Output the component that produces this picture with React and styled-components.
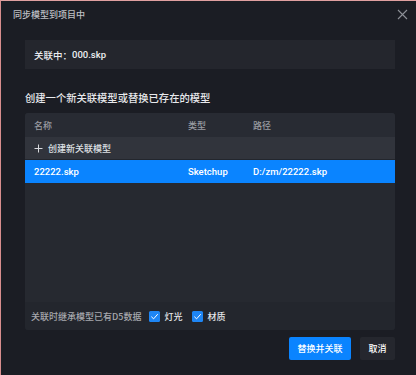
import React from "react";
import styled, { createGlobalStyle } from "styled-components";

const Global = createGlobalStyle`
  html, body { margin: 0; padding: 0; background: #1b1d24; }
  body { font-family: "Noto Sans CJK SC", "Noto Sans", sans-serif; }
  * { box-sizing: border-box; }
`;

const Dialog = styled.div`
  width: 416px;
  height: 375px;
  background: #1b1d24;
  border-top: 1px solid #e0a0a0;
  border-left: 1px solid #d88e8e;
  display: flex;
  flex-direction: column;
  overflow: hidden;
`;

const TitleBar = styled.div`
  height: 26px;
  display: flex;
  align-items: center;
  justify-content: space-between;
  padding: 0 7px 0 12px;
`;

const Title = styled.span`
  font-size: 9px;
  font-weight: 500;
  color: #bfc0c4;
`;

const Close = styled.button`
  background: none;
  border: none;
  padding: 0;
  width: 14px;
  height: 14px;
  display: flex;
  align-items: center;
  justify-content: center;
  cursor: pointer;
`;

const Body = styled.div`
  padding: 13px 21px 0 24px;
  display: flex;
  flex-direction: column;
`;

const InfoBox = styled.div`
  height: 29px;
  background: #24262d;
  display: flex;
  align-items: center;
  padding-left: 9px;
  font-size: 9.5px;
  font-weight: 500;
  color: #eceef2;
`;

const Latin = styled.span`
  font-family: "Roboto", "Noto Sans CJK SC", sans-serif;
`;

const Heading = styled.div`
  margin-top: 20px;
  height: 16px;
  font-size: 10.3px;
  font-weight: 500;
  color: #e8e9ec;
  display: flex;
  align-items: center;
`;

const Table = styled.div`
  margin-top: 8px;
  height: 217px;
  border-radius: 3px;
  overflow: hidden;
  display: flex;
  flex-direction: column;
  background: #23262d;
`;

const Row = styled.div`
  display: grid;
  grid-template-columns: 154px 65px 1fr;
  align-items: center;
  height: ${(p) => p.$h}px;
  padding-left: 9px;
  background: ${(p) => p.$bg};
  color: ${(p) => p.$color};
  font-size: ${(p) => (p.$latin ? 9.5 : 9)}px;
  font-weight: 500;
`;

const CreateRow = styled.div`
  display: flex;
  align-items: center;
  gap: 5px;
  height: 23px;
  padding-left: 9px;
  background: #31343c;
  color: #dfe0e4;
  font-size: 9px;
  font-weight: 500;
  border-bottom: 1px solid #23262d;
`;

const Cell = styled.span`
  font-family: ${(p) => (p.$latin ? '"Roboto", "Noto Sans CJK SC", sans-serif' : '"Noto Sans CJK SC", sans-serif')};
`;

const EmptyArea = styled.div`
  flex: 1;
  background: #262930;
`;

const Footer = styled.div`
  height: 28px;
  display: flex;
  align-items: center;
  padding-left: 6px;
  background: #23262d;
  font-size: 9px;
  font-weight: 500;
`;

const FooterLabel = styled.span`
  color: #a7a9ae;
  margin-right: 8px;
`;

const Check = styled.label`
  display: flex;
  align-items: center;
  gap: 4px;
  color: #e5e6ea;
  margin-right: 10px;
`;

const Box = styled.span`
  width: 11px;
  height: 11px;
  background: #1e86f5;
  border-radius: 1.5px;
  display: flex;
  align-items: center;
  justify-content: center;
`;

const Actions = styled.div`
  display: flex;
  justify-content: flex-end;
  gap: 9px;
  margin-top: 7px;
`;

const Button = styled.button`
  height: 23px;
  border: none;
  border-radius: 2px;
  padding: 0;
  width: ${(p) => (p.$primary ? 62 : 35)}px;
  font-family: "Noto Sans CJK SC", sans-serif;
  font-size: 9px;
  font-weight: 500;
  color: #ffffff;
  background: ${(p) => (p.$primary ? "#0a84ff" : "#25272e")};
`;

const CheckIcon = () => (
  <svg width="9" height="9" viewBox="0 0 10 10">
    <path d="M1.5 5.2 L4 7.6 L8.6 2.4" fill="none" stroke="#fff" strokeWidth="1.1" />
  </svg>
);

export default function App() {
  return (
    <>
      <Global />
      <Dialog>
        <TitleBar>
          <Title>同步模型到项目中</Title>
          <Close aria-label="关闭">
            <svg width="11" height="11" viewBox="0 0 11 11">
              <path d="M1 1 L10 10 M10 1 L1 10" stroke="#8d9097" strokeWidth="1.1" />
            </svg>
          </Close>
        </TitleBar>
        <Body>
          <InfoBox>
            关联中：<Latin>000.skp</Latin>
          </InfoBox>
          <Heading>创建一个新关联模型或替换已存在的模型</Heading>
          <Table>
            <Row $h={24} $bg="#282b33" $color="#9a9ca2">
              <Cell>名称</Cell>
              <Cell>类型</Cell>
              <Cell>路径</Cell>
            </Row>
            <CreateRow>
              <svg width="9" height="9" viewBox="0 0 9 9">
                <path d="M4.5 0.5 V8.5 M0.5 4.5 H8.5" stroke="#d8d9dd" strokeWidth="1" />
              </svg>
              <span>创建新关联模型</span>
            </CreateRow>
            <Row $h={23} $bg="#0a84ff" $color="#ffffff" $latin>
              <Cell $latin>22222.skp</Cell>
              <Cell $latin>Sketchup</Cell>
              <Cell $latin>D:/zm/22222.skp</Cell>
            </Row>
            <EmptyArea />
            <Footer>
              <FooterLabel>关联时继承模型已有D5数据</FooterLabel>
              <Check>
                <Box><CheckIcon /></Box>
                灯光
              </Check>
              <Check>
                <Box><CheckIcon /></Box>
                材质
              </Check>
            </Footer>
          </Table>
          <Actions>
            <Button $primary>替换并关联</Button>
            <Button>取消</Button>
          </Actions>
        </Body>
      </Dialog>
    </>
  );
}
